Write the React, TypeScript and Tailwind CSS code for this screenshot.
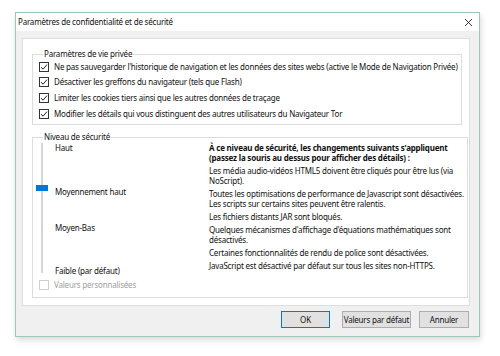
import React from "react";

const font = { fontFamily: '"Noto Sans", "Open Sans", sans-serif', letterSpacing: "-0.2px" };

function Check({ disabled }: { disabled?: boolean }) {
  return (
    <span
      className={
        "relative inline-flex h-[10px] w-[10px] shrink-0 items-center justify-center border bg-white " +
        (disabled ? "border-[#cfcfcf]" : "border-[#333]")
      }
    >
      {!disabled && (
        <svg width="8" height="8" viewBox="0 0 8 8" className="block">
          <path d="M1 4.2 L3.1 6.2 L7 1.6" fill="none" stroke="#222" strokeWidth="1" />
        </svg>
      )}
    </span>
  );
}

function Row({ children }: { children: React.ReactNode }) {
  return (
    <div className="flex h-[15.6px] items-center gap-[5px]">
      <Check />
      <span className="whitespace-nowrap">{children}</span>
    </div>
  );
}

export default function App() {
  return (
    <div
      className="h-[356px] w-[500px] bg-white pl-[15px] pt-[12px] text-[8px] leading-[10px] text-[#111]"
      style={font}
    >
      <div className="flex h-[325px] w-[465px] flex-col border border-[#9fc7b8] bg-[#f0f0f0] shadow-[1px_3px_6px_rgba(0,0,0,0.15)]">
        {/* title bar */}
        <div className="flex h-[18px] items-center justify-between bg-white pl-[2px] pr-[6px]">
          <span>Paramètres de confidentialité et de sécurité</span>
          <svg width="9" height="9" viewBox="0 0 9 9">
            <path d="M1 1 L8 8 M8 1 L1 8" stroke="#222" strokeWidth="0.9" />
          </svg>
        </div>
        {/* body */}
        <div className="flex flex-1 flex-col pl-[6px] pr-[9px] pt-[7px]">
          <div className="flex h-[268px] flex-col border border-[#dedede] bg-white pl-[9px] pr-[7px] pt-[10px]">
            <fieldset className="h-[76px] border border-[#dcdcdc] pl-[6px]">
              <legend className="ml-[4px] px-[1px] leading-[10px]">Paramètres de vie privée</legend>
              <div className="flex flex-col">
                <Row>
                  Ne pas sauvegarder l'historique de navigation et les données des sites webs (active le Mode de
                  Navigation Privée)
                </Row>
                <Row>Désactiver les greffons du navigateur (tels que Flash)</Row>
                <Row>Limiter les cookies tiers ainsi que les autres données de traçage</Row>
                <Row>Modifier les détails qui vous distinguent des autres utilisateurs du Navigateur Tor</Row>
              </div>
            </fieldset>
            <fieldset className="mt-[7px] h-[166px] border border-[#dcdcdc] pl-[6px]">
              <legend className="ml-[4px] px-[1px] leading-[10px]">Niveau de sécurité</legend>
              <div className="flex pt-[1px]">
                <div className="relative w-[170px]">
                  <div className="absolute left-[2px] top-[0px] h-[130px] w-[2px] bg-[#d6d6d6]" />
                  <div className="absolute left-[-3px] top-[42px] h-[6px] w-[12px] bg-[#0078d7]" />
                  <div className="flex flex-col pl-[16px]">
                    <span>Haut</span>
                    <span className="mt-[34px]">Moyennement haut</span>
                    <span className="mt-[26px]">Moyen-Bas</span>
                    <span className="mt-[33px]">Faible (par défaut)</span>
                  </div>
                </div>
                <div className="flex w-[258px] flex-col">
                  <p className="font-bold">
                    À ce niveau de sécurité, les changements suivants s'appliquent (passez la souris au dessus pour
                    afficher des détails) :
                  </p>
                  <p className="mt-[3px]">
                    Les média audio-vidéos HTML5 doivent être cliqués pour être lus (via NoScript).
                  </p>
                  <p className="mt-[3px]">
                    Toutes les optimisations de performance de Javascript sont désactivées. Les scripts sur certains
                    sites peuvent être ralentis.
                  </p>
                  <p className="mt-[3px]">Les fichiers distants JAR sont bloqués.</p>
                  <p className="mt-[3px]">Quelques mécanismes d'affichage d'équations mathématiques sont désactivés.</p>
                  <p className="mt-[3px]">Certaines fonctionnalités de rendu de police sont désactivées.</p>
                  <p className="mt-[3px]">JavaScript est désactivé par défaut sur tous les sites non-HTTPS.</p>
                </div>
              </div>
              <div className="mt-[3px] flex h-[12px] items-center gap-[5px] text-[#a0a0a0]">
                <Check disabled />
                <span>Valeurs personnalisées</span>
              </div>
            </fieldset>
          </div>
          <div className="mt-[5px] flex justify-end pr-[1px]">
            <button className="h-[17px] w-[49px] whitespace-nowrap border border-[#0078d7] bg-[#e1e1e1] leading-[10px]">
              OK
            </button>
            <button className="ml-[12px] h-[17px] w-[69px] whitespace-nowrap border border-[#adadad] bg-[#e1e1e1] leading-[10px]">
              Valeurs par défaut
            </button>
            <button className="ml-[8px] h-[17px] w-[50px] whitespace-nowrap border border-[#adadad] bg-[#e1e1e1] leading-[10px]">
              Annuler
            </button>
          </div>
        </div>
      </div>
    </div>
  );
}
